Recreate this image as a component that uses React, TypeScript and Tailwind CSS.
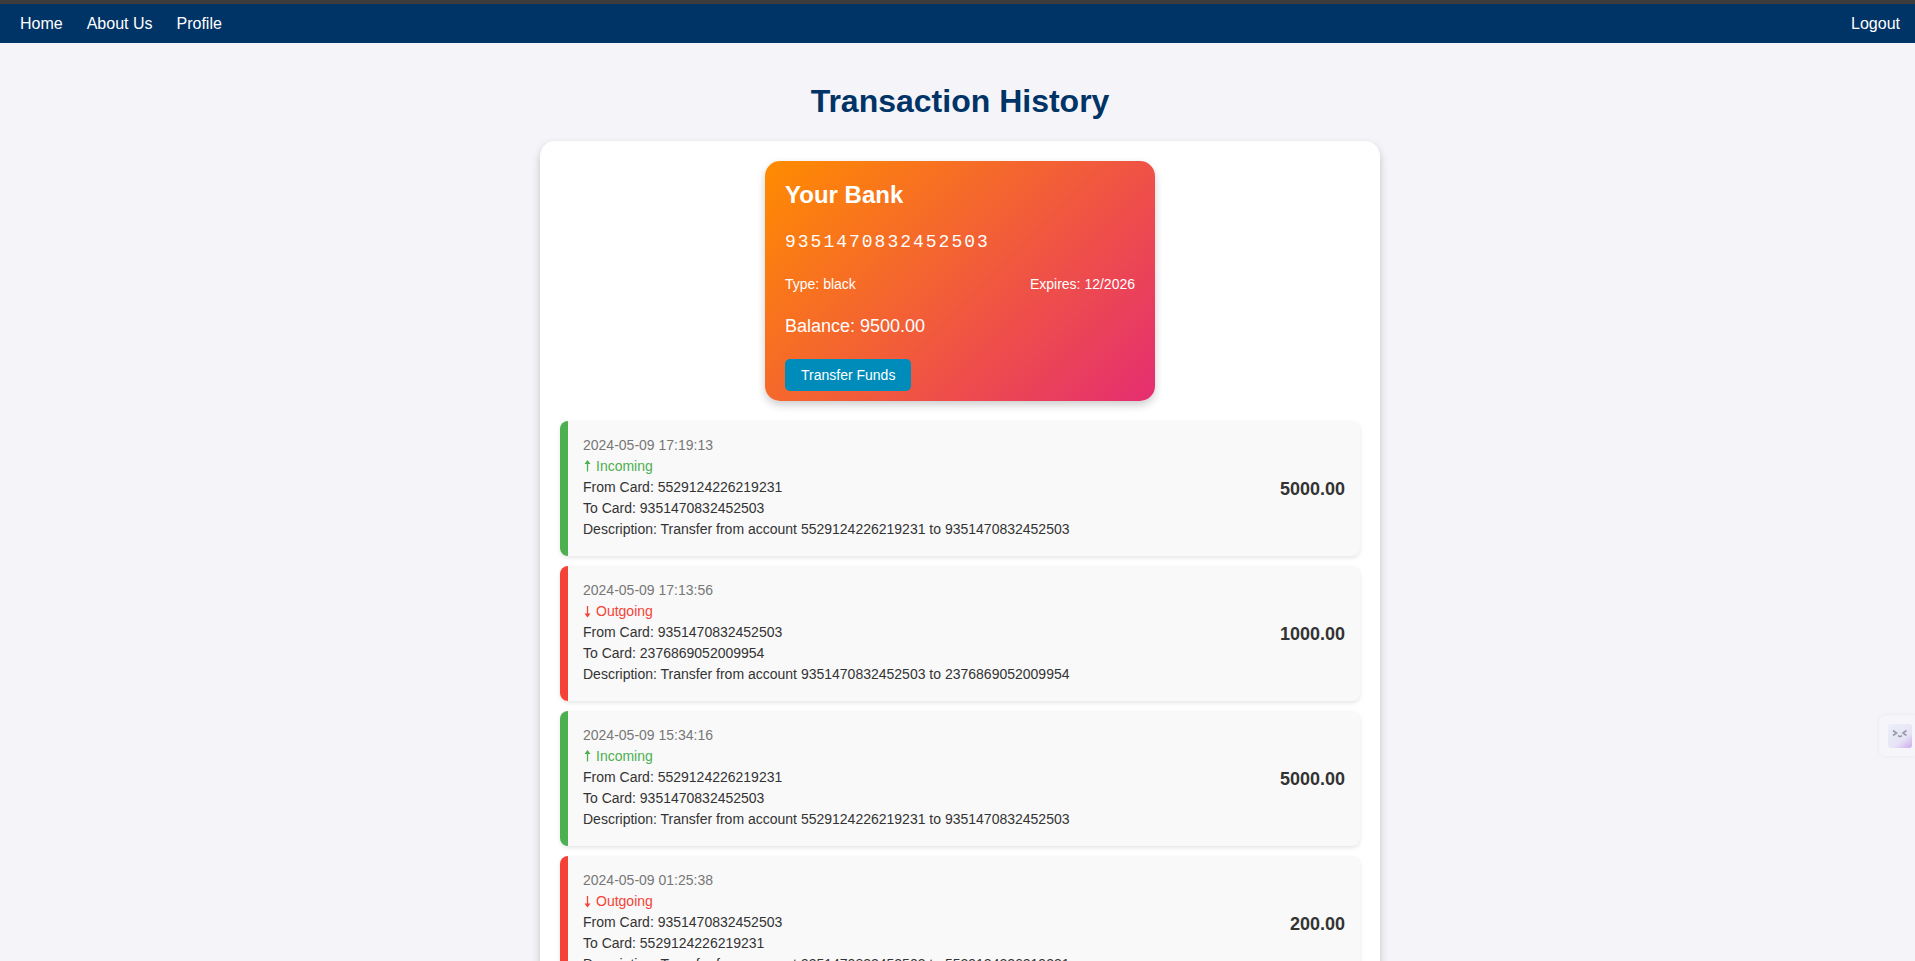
type Transaction = {
  date: string;
  incoming: boolean;
  from: string;
  to: string;
  amount: string;
};

const transactions: Transaction[] = [
  { date: "2024-05-09 17:19:13", incoming: true, from: "5529124226219231", to: "9351470832452503", amount: "5000.00" },
  { date: "2024-05-09 17:13:56", incoming: false, from: "9351470832452503", to: "2376869052009954", amount: "1000.00" },
  { date: "2024-05-09 15:34:16", incoming: true, from: "5529124226219231", to: "9351470832452503", amount: "5000.00" },
  { date: "2024-05-09 01:25:38", incoming: false, from: "9351470832452503", to: "5529124226219231", amount: "200.00" },
];

function Arrow({ up }: { up: boolean }) {
  return (
    <svg viewBox="0 0 9 14" className="h-3.5 w-[9px]" fill="none" stroke="currentColor" strokeWidth="1.3" aria-hidden="true">
      {up ? (
        <>
          <path d="M4.5 11.5V1" />
          <path d="M1.5 4 4.5 0l3 4Z" fill="currentColor" stroke="none" />
        </>
      ) : (
        <>
          <path d="M4.5 1V10" />
          <path d="M1.5 8.500l3 4 3-4Z" fill="currentColor" stroke="none" />
        </>
      )}
    </svg>
  );
}

function NavBar() {
  return (
    <nav className="flex h-[39px] items-center justify-between bg-[#003366] pr-[15px] pl-5 text-base text-white">
      <div className="flex gap-6">
        <a href="#home">Home</a>
        <a href="#about">About Us</a>
        <a href="#profile">Profile</a>
      </div>
      <a href="#logout">Logout</a>
    </nav>
  );
}

function BankCard() {
  return (
    <section className="mx-auto flex h-60 w-[390px] flex-col items-start rounded-[15px] bg-[linear-gradient(135deg,#ff8c00,#e52e71)] px-5 pt-4 text-white shadow-[0_4px_8px_rgba(0,0,0,0.2)]">
      <h2 className="text-2xl leading-9 font-bold">Your Bank</h2>
      <p className="mt-[17px] font-['Liberation_Mono',monospace] text-lg leading-6 tracking-[2px]">9351470832452503</p>
      <div className="mt-5 flex w-full justify-between text-sm leading-5">
        <span>Type: black</span>
        <span>Expires: 12/2026</span>
      </div>
      <p className="mt-5 text-lg leading-6">Balance: 9500.00</p>
      <button type="button" className="mt-[21px] h-8 rounded-[5px] bg-[#008cba] px-4 text-sm">
        Transfer Funds
      </button>
    </section>
  );
}

function TransactionItem({ item }: { item: Transaction }) {
  return (
    <li
      className={`flex items-center justify-between rounded-lg border-l-8 bg-[#f9f9f9] px-[15px] py-3 shadow-[0_2px_4px_rgba(0,0,0,0.1)] ${
        item.incoming ? "border-[#4caf50]" : "border-[#f44336]"
      }`}
    >
      <div className="pt-0.5 pb-1 text-sm leading-[21px]">
        <p className="text-[#777777]">{item.date}</p>
        <p className={`flex items-center gap-1 ${item.incoming ? "text-[#4caf50]" : "text-[#f44336]"}`}>
          <Arrow up={item.incoming} />
          {item.incoming ? "Incoming" : "Outgoing"}
        </p>
        <p>From Card: {item.from}</p>
        <p>To Card: {item.to}</p>
        <p>
          Description: Transfer from account {item.from} to {item.to}
        </p>
      </div>
      <span className="text-lg font-bold">{item.amount}</span>
    </li>
  );
}

function AssistantTab() {
  return (
    <button
      type="button"
      aria-label="Open assistant"
      className="fixed top-[715px] right-0 flex h-[41px] w-9 items-center justify-end rounded-l-lg bg-[#f6f5fa] pr-[3px] shadow-[0_0_4px_rgba(0,0,0,0.06)]"
    >
      <svg viewBox="0 0 24 24" className="size-6" fill="none">
        <defs>
          <linearGradient id="face" x1="0.2" y1="0" x2="1" y2="1">
            <stop offset="0" stopColor="#e9eef8" />
            <stop offset="0.6" stopColor="#e6e4f5" />
            <stop offset="1" stopColor="#cfa8ee" />
          </linearGradient>
        </defs>
        <rect width="24" height="24" rx="3" fill="url(#face)" />
        <path d="M5 6.500 8.500 9 5 11.500M18.500 6.500 15 9l3.500 2.500M10 11.500q2 2 4 0" stroke="#9a9cab" strokeWidth="1.7" />
      </svg>
    </button>
  );
}

export default function App() {
  return (
    <div className="min-h-screen bg-[#f4f4f9] pb-5 font-['Liberation_Sans',Arial,sans-serif] text-[#333333]">
      <div className="h-1 bg-[#3c3c3c]" />
      <NavBar />
      <div className="pt-[35px] pl-[5px]">
        <main className="mx-auto w-full max-w-[840px]">
          <h1 className="text-center text-[32px] leading-[46px] font-bold text-[#003366]">Transaction History</h1>
          <div className="mt-[17px] rounded-[15px] bg-white p-5 shadow-[0_4px_8px_rgba(0,0,0,0.2)]">
            <BankCard />
            <ul className="mt-5 flex flex-col gap-2.5">
              {transactions.map((item) => (
                <TransactionItem key={item.date} item={item} />
              ))}
            </ul>
          </div>
        </main>
      </div>
      <AssistantTab />
    </div>
  );
}
